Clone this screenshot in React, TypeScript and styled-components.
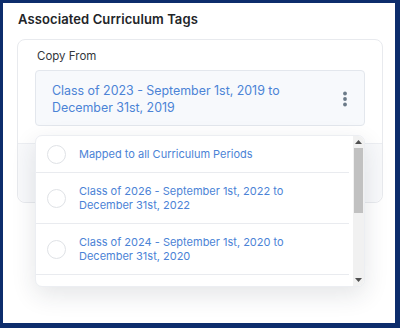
import React from 'react';
import styled, { createGlobalStyle } from 'styled-components';

const GlobalStyle = createGlobalStyle`
  html, body {
    margin: 0;
    padding: 0;
    background: #ffffff;
  }
  body {
    font-family: Inter, 'Noto Sans', sans-serif;
  }
`;

type Period = { first: string; second?: string };

const periods: Period[] = [
  { first: 'Mapped to all Curriculum Periods' },
  { first: 'Class of 2026 - September 1st, 2022 to', second: 'December 31st, 2022' },
  { first: 'Class of 2024 - September 1st, 2020 to', second: 'December 31st, 2020' },
];

const KebabIcon = () => (
  <svg width="6" height="16" viewBox="0 0 6 16">
    <circle cx="3" cy="2.5" r="1.9" fill="#6b7a88" />
    <circle cx="3" cy="8" r="1.9" fill="#6b7a88" />
    <circle cx="3" cy="13.5" r="1.9" fill="#6b7a88" />
  </svg>
);

const Arrow = ({ up }: { up?: boolean }) => (
  <svg width="7" height="4" viewBox="0 0 7 4">
    <path d={up ? 'M0 4 L3.5 0 L7 4 Z' : 'M0 0 L3.5 4 L7 0 Z'} fill="#505050" />
  </svg>
);

const App = () => {
  return (
    <>
      <GlobalStyle />
      <Frame>
        <Title>Associated Curriculum Tags</Title>
        <Card>
          <CardBody>
            <Label>Copy From</Label>
            <SelectWrap>
              <SelectBox>
                <SelectText>
                  Class of 2023 - September 1st, 2019 to
                  <br />
                  December 31st, 2019
                </SelectText>
                <KebabButton>
                  <KebabIcon />
                </KebabButton>
              </SelectBox>
              <Dropdown>
                <OptionList>
                  {periods.map((p) => (
                    <Option key={p.first}>
                      <Radio />
                      <OptionText>
                        {p.first}
                        {p.second && (
                          <>
                            <br />
                            {p.second}
                          </>
                        )}
                      </OptionText>
                    </Option>
                  ))}
                </OptionList>
                <ScrollBar>
                  <ScrollButton>
                    <Arrow up />
                  </ScrollButton>
                  <ScrollTrack>
                    <ScrollThumb />
                  </ScrollTrack>
                  <ScrollButton>
                    <Arrow />
                  </ScrollButton>
                </ScrollBar>
              </Dropdown>
            </SelectWrap>
          </CardBody>
          <CardFooter />
        </Card>
      </Frame>
    </>
  );
};

export default App;

const Frame = styled.div`
  box-sizing: border-box;
  width: 400px;
  height: 328px;
  border-style: solid;
  border-color: #0d2d6c;
  border-width: 3px 5px 5px 3px;
  background: #ffffff;
  padding: 7px 12px 0 14px;
`;

const Title = styled.h2`
  margin: 0;
  font-size: 13px;
  font-weight: 600;
  color: #222428;
  line-height: 18px;
  padding-left: 1px;
  letter-spacing: 0.1px;
`;

const Card = styled.div`
  margin-top: 11px;
  border: 1px solid #e8eaee;
  border-radius: 8px;
  background: #ffffff;
`;

const CardBody = styled.div`
  padding: 8px 17px 17px 17px;
`;

const Label = styled.div`
  font-size: 11.5px;
  color: #34373c;
  line-height: 16px;
  padding-left: 2px;
  margin-bottom: 6px;
`;

const SelectWrap = styled.div`
  position: relative;
`;

const SelectBox = styled.div`
  display: flex;
  align-items: center;
  justify-content: space-between;
  box-sizing: border-box;
  height: 56px;
  padding: 0 14px 0 16px;
  background: #f7f9fc;
  border: 1px solid #e3e7ed;
  border-radius: 4px;
`;

const SelectText = styled.div`
  font-size: 12.4px;
  line-height: 17px;
  color: #4b83d6;
  margin-top: 1px;
`;

const KebabButton = styled.div`
  display: flex;
  align-items: center;
  justify-content: center;
  width: 10px;
  margin-top: 2px;
`;

const Dropdown = styled.div`
  position: absolute;
  top: calc(100% + 9px);
  left: 0;
  right: 0;
  height: 152px;
  box-sizing: border-box;
  display: flex;
  background: #ffffff;
  border: 1px solid #eceef2;
  border-radius: 7px;
  box-shadow: 0 8px 24px rgba(30, 40, 60, 0.12);
  overflow: hidden;
  z-index: 2;
`;

const OptionList = styled.div`
  flex: 1;
  overflow-y: auto;
  padding-right: 4px;
  scrollbar-width: none;
`;

const ScrollBar = styled.div`
  flex: none;
  width: 11px;
  display: flex;
  flex-direction: column;
  background: #f1f1f1;
`;

const ScrollButton = styled.div`
  flex: none;
  height: 12px;
  display: flex;
  align-items: center;
  justify-content: center;
`;

const ScrollTrack = styled.div`
  flex: 1;
  padding: 0 1px;
`;

const ScrollThumb = styled.div`
  height: 65px;
  background: #c1c1c1;
`;

const Option = styled.div`
  display: flex;
  align-items: center;
  gap: 13px;
  min-height: 36px;
  padding: 0 12px 0 11px;
  border-bottom: 1px solid #e9ebef;
  cursor: pointer;
`;

const Radio = styled.span`
  flex: none;
  box-sizing: border-box;
  width: 19px;
  height: 19px;
  border: 1px solid #dfe2e6;
  border-radius: 50%;
  background: #ffffff;
`;

const OptionText = styled.div`
  padding: 11px 0;
  font-size: 11px;
  line-height: 14px;
  color: #4b83d6;
`;

const CardFooter = styled.div`
  height: 58px;
  background: #f8f9fb;
  border-top: 1px solid #eceef2;
  border-radius: 0 0 8px 8px;
`;
